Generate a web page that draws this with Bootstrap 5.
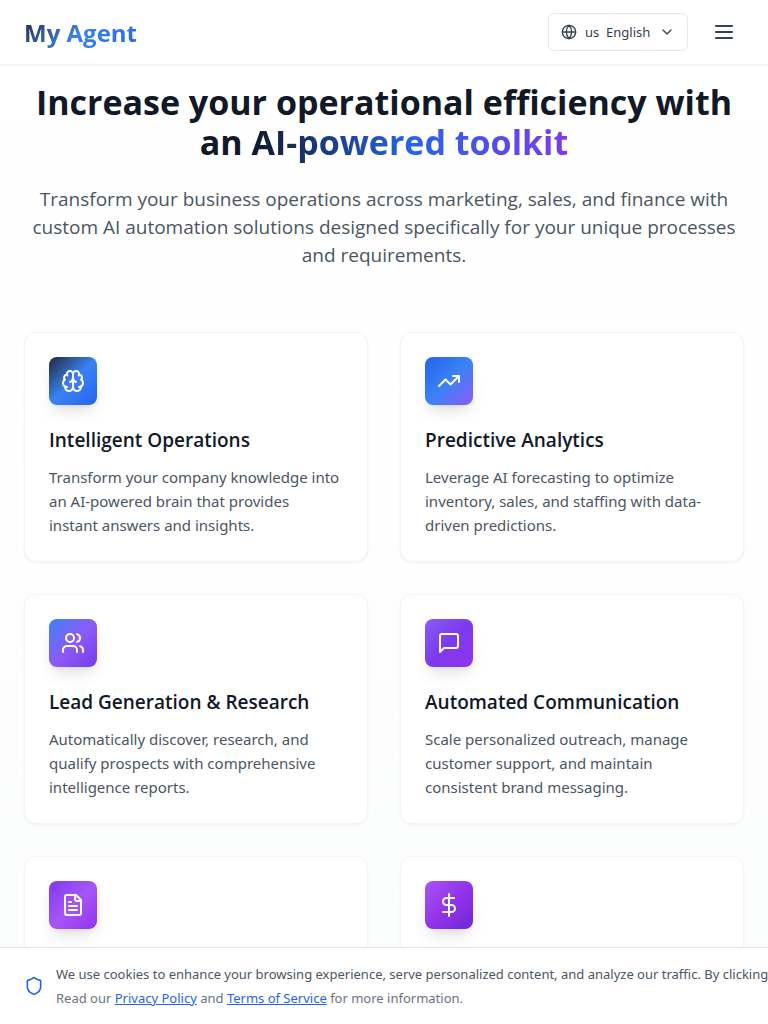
<!DOCTYPE html>
<html lang="en">
<head>
<meta charset="utf-8">
<meta name="viewport" content="width=device-width, initial-scale=1">
<title>My Agent</title>
<link href="https://cdn.jsdelivr.net/npm/bootstrap@5.3.0/dist/css/bootstrap.min.css" rel="stylesheet">
<style>
  body { font-family: "Noto Sans", "Open Sans", sans-serif; color: #111827; background: #fff; overflow-x: hidden; }
  svg { fill: none; stroke: currentColor; stroke-width: 2; stroke-linecap: round; stroke-linejoin: round; flex-shrink: 0; }
  .brand, .headline, .intro, .feature h3 { font-family: "Open Sans", "Noto Sans", sans-serif; }
  .site-header { min-height: 65px; background: #fff; border-bottom: 1px solid #f3f4f6; box-shadow: 0 1px 2px rgba(0,0,0,.05); }
  .brand { font-size: 24px; line-height: 32px; padding-top: 2px; font-weight: 700; text-decoration: none; color: transparent; background: linear-gradient(135deg, #1f2937, #3b82f6 50%, #2563eb); -webkit-background-clip: text; background-clip: text; }
  .language { height: 38px; border: 1px solid #e5e7eb; border-radius: 6px; color: #374151; background: #fff; font-size: 13px; }
  .language select { appearance: none; border: 0; padding: 0; color: inherit; background: transparent; line-height: 20px; }
  .menu-btn { color: #374151; line-height: 0; border: 0; }
  .features { background: linear-gradient(#fff, #fbfcfc); padding: 17px 24px 96px; }
  .headline { font-size: 34px; line-height: 40px; font-weight: 700; margin-bottom: 23px; }
  .headline span { color: transparent; background: linear-gradient(90deg, #111827, #2563eb 50%, #7c3aed); -webkit-background-clip: text; background-clip: text; }
  .intro { font-size: 19px; line-height: 28px; color: #4b5563; margin-bottom: 63px; }
  .feature { border: 1px solid #f3f4f6; border-radius: 12px; padding: 24px; background: #fff; box-shadow: 0 1px 2px rgba(0,0,0,.05); min-height: 230px; }
  .feature h3 { font-size: 19px; line-height: 28px; font-weight: 600; margin: 21px 0 11px; }
  .feature p { font-size: 15px; line-height: 24px; color: #4b5563; margin: 0; padding-right: 3px; }
  .tile { width: 48px; height: 48px; border-radius: 8px; color: #fff; box-shadow: 0 10px 15px -3px rgba(0,0,0,.1), 0 4px 6px -4px rgba(0,0,0,.1); }
  .tile-brain { background: linear-gradient(135deg, #1f2937, #3b82f6 50%, #2563eb); }
  .tile-trend { background: linear-gradient(135deg, #2563eb, #3b82f6 50%, #8b5cf6); }
  .tile-users { background: linear-gradient(135deg, #3b82f6, #8b5cf6 50%, #7c3aed); }
  .tile-chat { background: linear-gradient(135deg, #8b5cf6, #7c3aed 50%, #9333ea); }
  .tile-file { background: linear-gradient(135deg, #7c3aed, #a855f7 50%, #9333ea); }
  .tile-money { background: linear-gradient(135deg, #a855f7, #9333ea 50%, #6d28d9); }
  .cookies { background: #fff; border-top: 1px solid #e5e7eb; padding: 14px; padding-left: 24px; overflow: hidden; font-size: 13px; line-height: 24px; color: #4b5563; }
  .cookies svg, .cookies a { color: #2563eb; }
  .cookies .legal { color: #6b7280; }
</style>
</head>
<body>
<header class="site-header sticky-top d-flex align-items-center justify-content-between px-4">
  <a class="brand" href="#">My Agent</a>
  <div class="d-flex align-items-center gap-3">
    <div class="language d-flex align-items-center gap-2 px-2">
      <svg class="ms-1" width="16" height="16" viewBox="0 0 24 24"><circle cx="12" cy="12" r="10"/><path d="M12 2a14.5 14.5 0 0 0 0 20 14.5 14.5 0 0 0 0-20M2 12h20"/></svg>
      <select aria-label="Language"><option>us&nbsp; English</option></select>
      <svg class="me-1" width="16" height="16" viewBox="0 0 24 24"><path d="m6 9 6 6 6-6"/></svg>
    </div>
    <button class="menu-btn btn p-2" type="button" aria-label="Open menu">
      <svg width="24" height="24" viewBox="0 0 24 24"><path d="M4 6h16M4 12h16M4 18h16"/></svg>
    </button>
  </div>
</header>
<main class="features">
  <div class="text-center">
    <h1 class="headline">Increase your operational efficiency with an <span>AI-powered toolkit</span></h1>
    <p class="intro">Transform your business operations across marketing, sales, and finance with custom AI automation solutions designed specifically for your unique processes and requirements.</p>
  </div>
  <div class="row row-cols-1 row-cols-md-2" style="--bs-gutter-x:32px;--bs-gutter-y:32px">
    <div class="col"><article class="feature">
      <div class="tile tile-brain d-flex align-items-center justify-content-center"><svg width="24" height="24" viewBox="0 0 24 24"><path d="M12 5a3 3 0 1 0-5.997.125 4 4 0 0 0-2.526 5.77 4 4 0 0 0 .556 6.588A4 4 0 1 0 12 18Z"/><path d="M12 5a3 3 0 1 1 5.997.125 4 4 0 0 1 2.526 5.77 4 4 0 0 1-.556 6.588A4 4 0 1 1 12 18Z"/><path d="M15 13a4.5 4.5 0 0 1-3-4 4.5 4.5 0 0 1-3 4M17.599 6.5a3 3 0 0 0 .399-1.375M6.003 5.125A3 3 0 0 0 6.401 6.5M3.477 10.896a4 4 0 0 1 .585-.396M19.938 10.5a4 4 0 0 1 .585.396M6 18a4 4 0 0 1-1.967-.516M19.967 17.484A4 4 0 0 1 18 18"/></svg></div>
      <h3>Intelligent Operations</h3>
      <p>Transform your company knowledge into an AI-powered brain that provides instant answers and insights.</p>
    </article></div>
    <div class="col"><article class="feature">
      <div class="tile tile-trend d-flex align-items-center justify-content-center"><svg width="24" height="24" viewBox="0 0 24 24"><path d="m22 7-8.500 8.500-5-5L2 17M16 7h6v6"/></svg></div>
      <h3>Predictive Analytics</h3>
      <p>Leverage AI forecasting to optimize inventory, sales, and staffing with data-driven predictions.</p>
    </article></div>
    <div class="col"><article class="feature">
      <div class="tile tile-users d-flex align-items-center justify-content-center"><svg width="24" height="24" viewBox="0 0 24 24"><path d="M16 21v-2a4 4 0 0 0-4-4H6a4 4 0 0 0-4 4v2"/><circle cx="9" cy="7" r="4"/><path d="M22 21v-2a4 4 0 0 0-3-3.870M16 3.130a4 4 0 0 1 0 7.750"/></svg></div>
      <h3>Lead Generation &amp; Research</h3>
      <p>Automatically discover, research, and qualify prospects with comprehensive intelligence reports.</p>
    </article></div>
    <div class="col"><article class="feature">
      <div class="tile tile-chat d-flex align-items-center justify-content-center"><svg width="24" height="24" viewBox="0 0 24 24"><path d="M21 15a2 2 0 0 1-2 2H7l-4 4V5a2 2 0 0 1 2-2h14a2 2 0 0 1 2 2z"/></svg></div>
      <h3>Automated Communication</h3>
      <p>Scale personalized outreach, manage customer support, and maintain consistent brand messaging.</p>
    </article></div>
    <div class="col"><article class="feature">
      <div class="tile tile-file d-flex align-items-center justify-content-center"><svg width="24" height="24" viewBox="0 0 24 24"><path d="M15 2H6a2 2 0 0 0-2 2v16a2 2 0 0 0 2 2h12a2 2 0 0 0 2-2V7ZM14 2v4a2 2 0 0 0 2 2h4M10 9H8M16 13H8M16 17H8"/></svg></div>
    </article></div>
    <div class="col"><article class="feature">
      <div class="tile tile-money d-flex align-items-center justify-content-center"><svg width="24" height="24" viewBox="0 0 24 24"><path d="M12 1v22M17 5H9.500a3.500 3.500 0 0 0 0 7h5a3.500 3.500 0 0 1 0 7H6"/></svg></div>
    </article></div>
  </div>
</main>
<aside class="cookies fixed-bottom d-flex align-items-center gap-2" aria-label="Cookie notice">
  <svg class="me-1" width="20" height="20" viewBox="0 0 24 24"><path d="M20 13c0 5-3.500 7.500-7.660 8.950a1 1 0 0 1-.670-.010C7.500 20.500 4 18 4 13V6a1 1 0 0 1 1-1c2 0 4.500-1.200 6.240-2.720a1.170 1.170 0 0 1 1.520 0C14.510 3.810 17 5 19 5a1 1 0 0 1 1 1z"/></svg>
  <div class="text-nowrap">
    <div>We use cookies to enhance your browsing experience, serve personalized content, and analyze our traffic. By clicking</div>
    <div class="legal">Read our <a href="#">Privacy Policy</a> and <a href="#">Terms of Service</a> for more information.</div>
  </div>
</aside>
<script src="https://cdn.jsdelivr.net/npm/bootstrap@5.3.0/dist/js/bootstrap.bundle.min.js"></script>
</body>
</html>
